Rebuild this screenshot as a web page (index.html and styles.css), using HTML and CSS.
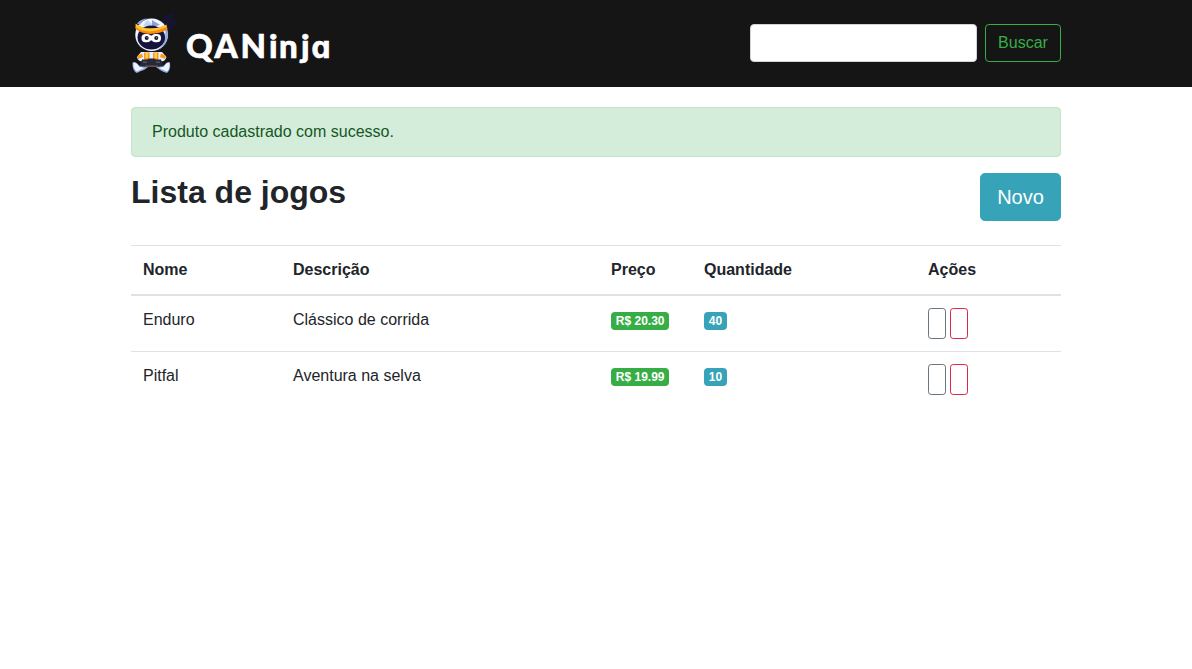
FILE: index.html
```html
<!DOCTYPE html>
<html lang="pt-BR">
<head>
<meta charset="utf-8">
<title>QA Ninja</title>
<link rel="stylesheet" href="styles.css">
</head>
<body>
<header class="navbar">
  <div class="container navbar-inner">
    <a class="brand">
      <svg class="logo" width="202" height="66" viewBox="130 10 202 66" role="img">
        <!-- headband knot -->
        <path fill="#15152f" d="M162 22 Q164 14 174.500 12.500 Q172 16 173 20.500 L179.500 23 Q176 26 171.500 26.500 Q173 28 172.500 31 Q168 31 164 27Z"/>
        <!-- head -->
        <ellipse cx="151.700" cy="35" rx="16.900" ry="16.800" fill="#1b2046"/>
        <ellipse cx="151.600" cy="34.800" rx="16.300" ry="16.200" fill="#f1f6ff"/>
        <path fill="#8ca6da" d="M164 25 Q169 30 167.500 38 Q165.500 46 158 50 Q164 45 165.300 38 Q166 32 164 25Z"/>
        <path fill="#8ba3d2" d="M137 23.500 Q141 18.600 148 18.600 Q142 21 140 25Z M152 20 L160 25 L152 27Z"/>
        <path fill="#c4d5f2" d="M147 20 L152 24 L149 28 L143 26Z"/>
        <ellipse cx="151.300" cy="37.500" rx="13.800" ry="12" fill="#15153b"/>
        <path fill="#f98b12" d="M135.500 23.500 Q142 28.500 150 28.500 Q159 28.500 166.500 24.500 L167.600 29.500 Q160 33.500 150 34 Q141 33.500 135.300 28.500Z"/>
        <path fill="#ffc52d" d="M136 24 Q142 28.500 150 28.500 Q159 28.500 166 25 L166.500 27 Q157 31 149 31.500 Q141 31 136 27Z"/>
        <rect x="141.500" y="34" width="9.500" height="8.200" rx="4" fill="#fff"/>
        <rect x="151.500" y="34" width="9.500" height="8.200" rx="4" fill="#fff"/>
        <path fill="#fff" d="M148 35.500 H155 V40.500 H148Z"/>
        <circle cx="146.700" cy="38" r="2" fill="#111334"/><circle cx="156.300" cy="38" r="2" fill="#111334"/>
        <circle cx="147" cy="37.700" r=".5" fill="#fff"/><circle cx="156.600" cy="37.700" r=".5" fill="#fff"/>
        <!-- legs, arms and torso -->
        <path fill="#8faee0" d="M132.500 62.500 Q136 60.500 139 65.500 L148 67 L144 70 Q140 71 137 73 Q132 71 132.500 62.500Z M170 62.500 Q167 60.500 164 65.500 L156 67 L160 70 Q163 72 167 73 Q171 70 170 62.500Z"/>
        <path fill="#edf4ff" d="M133.500 63 Q136 62 139 66.500 L144 68 L137 71.500 Q133 69 133.500 63Z M169.300 63 Q167 62 164 66.500 L159 68 L167 71.500 Q170 69 169.300 63Z"/>
        <path fill="#e9f0ff" d="M141 52 H162 L166.500 57 Q165 62 160 61.500 H144 Q138 62 137 57Z"/>
        <path fill="#f99b16" d="M144 52.500 H149.500 V61 H144Z M153 52.500 H158.500 V61 H153Z M137.500 56 L142 53.500 L143 57 L138 59Z M161 53.500 L166 56 L165 59 L160 57Z"/>
        <path fill="#ffcf55" d="M145.500 53 H148 V58 H145.500Z M154.500 53 H157 V58 H154.500Z"/>
        <path fill="#272938" d="M142 59.500 H147 L149 58.500 H154 L156 59.500 H161 L163.500 66.500 H139.500Z"/>
        <path fill="#555260" d="M143 61.500 H147 V63 H143Z M156 61.500 H160 V63 H156Z"/>
        <rect x="145" y="65.500" width="13" height="1.500" fill="#6a5154"/>
        <text class="logo-text" y="57.500" x="186 214.500 238 240.500 269 279 301">QA Ninj<tspan class="logo-round" x="311.500">a</tspan></text>
      </svg>
    </a>
    <form class="search">
      <input class="search-input" type="text">
      <button class="btn btn-search" type="button">Buscar</button>
    </form>
  </div>
</header>
<main class="container">
  <div class="alert">Produto cadastrado com sucesso.</div>
  <div class="page-head">
    <h2 class="title">Lista de jogos</h2>
    <button class="btn btn-new" type="button">Novo</button>
  </div>
  <table class="table">
    <thead>
      <tr><th class="col-name">Nome</th><th class="col-desc">Descrição</th><th class="col-price">Preço</th><th class="col-qty">Quantidade</th><th>Ações</th></tr>
    </thead>
    <tbody>
      <tr>
        <td>Enduro</td><td>Clássico de corrida</td>
        <td><span class="badge price">R$ 20.30</span></td><td><span class="badge qty">40</span></td>
        <td><div class="actions"><button class="action edit"></button><button class="action remove"></button></div></td>
      </tr>
      <tr>
        <td>Pitfal</td><td>Aventura na selva</td>
        <td><span class="badge price">R$ 19.99</span></td><td><span class="badge qty">10</span></td>
        <td><div class="actions"><button class="action edit"></button><button class="action remove"></button></div></td>
      </tr>
    </tbody>
  </table>
</main>
</body>
</html>
```
FILE: styles.css
```css
* { box-sizing: border-box; }
body {
  margin: 0;
  background: #fff;
  color: #212529;
  font: 16px/24px "Liberation Sans", Arial, sans-serif;
}
.container { width: 930px; margin: 0 auto; }
.navbar { height: 87px; background: #151515; margin-bottom: 20px; }
.navbar-inner { height: 86px; display: flex; align-items: center; justify-content: space-between; }
.brand { display: flex; margin-left: -1px; }
.logo { display: block; overflow: visible; }
.logo-text { font: 900 33px Lato, sans-serif; fill: #fff; stroke: #fff; stroke-width: .6px; }
.logo-round { font: 700 30px Inter, sans-serif; font-feature-settings: "cv11"; }
.search { display: flex; gap: 8px; }
.search-input {
  width: 227px;
  height: 38px;
  padding: 6px 12px;
  border: 1px solid #ced4da;
  border-radius: 4px;
  background: #fff;
}
.btn { font-family: inherit; border: 1px solid; border-radius: 4px; }
.btn-search {
  width: 76px;
  height: 38px;
  padding: 5px 0 6px;
  font-size: 16px;
  line-height: 24px;
  color: #37ad45;
  border-color: #37ad45;
  background: transparent;
}
.alert {
  height: 50px;
  padding: 12px 20px;
  margin-bottom: 16px;
  color: #155724;
  background: #d4edda;
  border: 1px solid #c3e6cb;
  border-radius: 4px;
}
.page-head { display: flex; align-items: flex-start; justify-content: space-between; margin-bottom: 24px; }
.title { margin: 0; font-size: 32px; line-height: 38.4px; font-weight: 700; }
.btn-new {
  width: 81px;
  height: 48px;
  padding: 8px 0;
  font-size: 20px;
  line-height: 30px;
  color: #fff;
  background: #37a3b8;
  border-color: #37a3b8;
  border-radius: 4.8px;
}
.table { width: 930px; table-layout: fixed; border-collapse: separate; border-spacing: 0; }
.table th, .table td { padding: 12px; text-align: left; vertical-align: top; }
.table th { border-top: 1px solid #dee2e6; border-bottom: 2px solid #dee2e6; }
.table tr + tr td { border-top: 1px solid #dee2e6; }
.col-name { width: 150px; }
.col-desc { width: 318px; }
.col-price { width: 93px; }
.col-qty { width: 224px; }
.badge {
  display: inline-block;
  padding: 3px 4.8px;
  font-size: 12px;
  line-height: 12px;
  font-weight: 700;
  color: #fff;
  border-radius: 4px;
  vertical-align: baseline;
}
.price { background: #37ad45; }
.qty { background: #37a3b8; }
.actions { display: flex; gap: 4px; }
.action { width: 18px; height: 31px; padding: 0; background: transparent; border: 1px solid; border-radius: 3.2px; }
.edit { border-color: #6c757d; }
.remove { border-color: #dc2846; }
```
